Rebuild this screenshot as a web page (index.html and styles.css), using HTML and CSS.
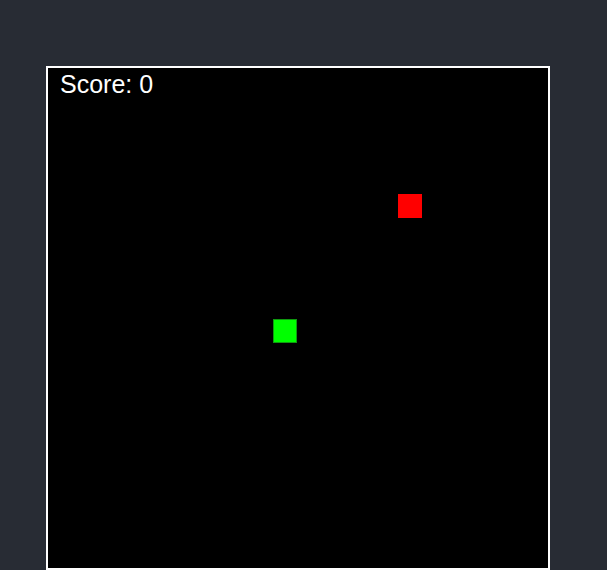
FILE: index.html
```html
<!DOCTYPE html>
<html lang="en">
<head>
<meta charset="utf-8">
<title>Snake</title>
<link rel="stylesheet" href="styles.css">
</head>
<body>
  <main class="app">
    <div class="board">
      <div class="score">Score: 0</div>
      <div class="cell food" style="left: 350px; top: 126px;"></div>
      <div class="cell snake" style="left: 225px; top: 251px;"></div>
    </div>
  </main>
</body>
</html>
```

FILE: styles.css
```css
html, body {
  margin: 0;
  padding: 0;
  background: #282c34;
  height: 100%;
  overflow: hidden;
}

.app {
  padding: 66px 0 0 46px;
}

/* 500x500 playing field */
.board {
  position: relative;
  width: 500px;
  height: 500px;
  background: #000;
  border: 2px solid #fff;
}

.score {
  position: absolute;
  left: 12px;
  top: 2px;
  color: #fff;
  font-family: "Liberation Sans", Arial, sans-serif;
  font-size: 25px;
  line-height: normal;
}

.cell {
  position: absolute;
  width: 24px;
  height: 24px;
  box-sizing: border-box;
}

.food {
  background: #ff0000;
}

.snake {
  background: #00ff00;
  border: 1px solid #0f9a0f;
}
```
